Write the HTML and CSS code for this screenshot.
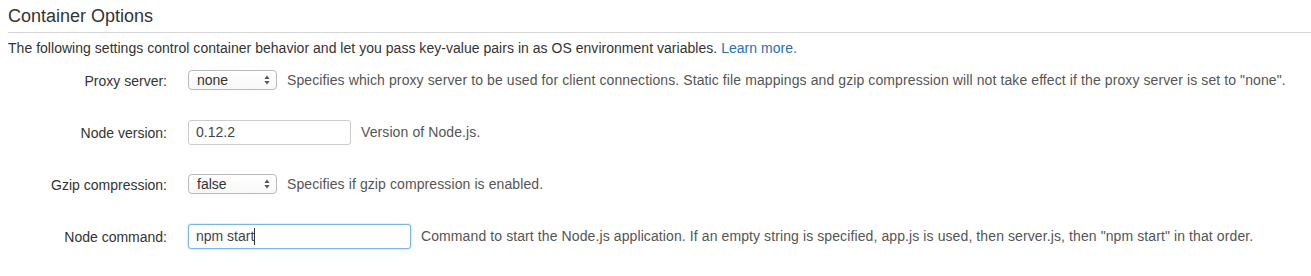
FILE: index.html
```html
<!DOCTYPE html>
<html lang="en">
<head>
<meta charset="utf-8">
<title>Container Options</title>
<link rel="stylesheet" href="styles.css">
</head>
<body>
<section class="panel">
  <h2 class="panel-title">Container Options</h2>
  <p class="intro">The following settings control container behavior and let you pass key-value pairs in as OS environment variables. <a class="link" href="#">Learn more.</a></p>
  <div class="form">
    <div class="row">
      <label class="label">Proxy server:</label>
      <div class="control">
        <div class="select-wrap">
          <select class="select"><option>none</option></select>
          <svg class="arrows" width="6" height="10" viewBox="0 0 6 10"><path d="M3 0.5 L5.6 4 L0.4 4 Z M3 9.5 L5.6 6 L0.4 6 Z" fill="#555"/></svg>
        </div>
        <span class="help">Specifies which proxy server to be used for client connections. Static file mappings and gzip compression will not take effect if the proxy server is set to "none".</span>
      </div>
    </div>
    <div class="row">
      <label class="label">Node version:</label>
      <div class="control">
        <input class="input input-short" type="text" value="0.12.2">
        <span class="help">Version of Node.js.</span>
      </div>
    </div>
    <div class="row">
      <label class="label">Gzip compression:</label>
      <div class="control">
        <div class="select-wrap">
          <select class="select"><option>false</option></select>
          <svg class="arrows" width="6" height="10" viewBox="0 0 6 10"><path d="M3 0.5 L5.6 4 L0.4 4 Z M3 9.5 L5.6 6 L0.4 6 Z" fill="#555"/></svg>
        </div>
        <span class="help">Specifies if gzip compression is enabled.</span>
      </div>
    </div>
    <div class="row">
      <label class="label">Node command:</label>
      <div class="control">
        <div class="input-wrap">
          <input class="input input-long input-focus" type="text" value="npm start">
          <span class="caret"></span>
        </div>
        <span class="help">Command to start the Node.js application. If an empty string is specified, app.js is used, then server.js, then "npm start" in that order.</span>
      </div>
    </div>
  </div>
</section>
</body>
</html>
```

FILE: styles.css
```css
html, body {
  margin: 0;
  padding: 0;
  background: #fff;
}

body {
  font-family: "Liberation Sans", Arial, sans-serif;
  color: #333;
  font-size: 14px;
}

.panel {
  padding: 0 0 0 8px;
}

.panel-title {
  margin: 0;
  padding-top: 4px;
  height: 28px;
  font-size: 18px;
  font-weight: normal;
  line-height: 24px;
  color: #333;
  border-bottom: 1px solid #d5d5d5;
}

.intro {
  margin: 7px 0 0 0;
  line-height: 16px;
  height: 16px;
  color: #333;
  white-space: nowrap;
  letter-spacing: 0.03px;
}

.link {
  color: #2a6ec1;
  text-decoration: none;
}

.form {
  display: flex;
  flex-direction: column;
  margin-top: -2px;
}

.row {
  display: grid;
  grid-template-columns: 159px 1fr;
  column-gap: 21px;
  align-items: center;
  height: 52px;
}

.label {
  text-align: right;
  color: #333;
  padding-top: 2px;
}

.control {
  display: flex;
  align-items: center;
  gap: 10px;
  white-space: nowrap;
}

.help {
  color: #555;
  letter-spacing: 0.1px;
}

.select-wrap {
  position: relative;
  width: 89px;
  height: 20px;
}

.select {
  appearance: none;
  -webkit-appearance: none;
  width: 89px;
  height: 20px;
  margin: 0;
  padding: 0 0 0 8px;
  border: 1px solid #b9b9b9;
  border-radius: 4px;
  background: linear-gradient(#ffffff, #f7f7f7);
  font-family: "Liberation Sans", Arial, sans-serif;
  font-size: 14px;
  color: #333;
  box-sizing: border-box;
}

.arrows {
  position: absolute;
  right: 7px;
  top: 5px;
  pointer-events: none;
}

.input {
  height: 25px;
  margin: 0;
  padding: 0 7px;
  border: 1px solid #cccccc;
  border-radius: 3px;
  font-family: "Liberation Sans", Arial, sans-serif;
  font-size: 14px;
  color: #444;
  box-sizing: border-box;
  background: #fff;
  outline: none;
}

.input-short {
  width: 163px;
}

.input-long {
  width: 223px;
}

.input-focus {
  border-color: #7cb4ea;
  box-shadow: 0 0 2px rgba(102, 175, 233, 0.7);
}

.input-wrap {
  position: relative;
}

.caret {
  position: absolute;
  left: 66px;
  top: 4px;
  width: 1px;
  height: 17px;
  background: #333;
}
```
